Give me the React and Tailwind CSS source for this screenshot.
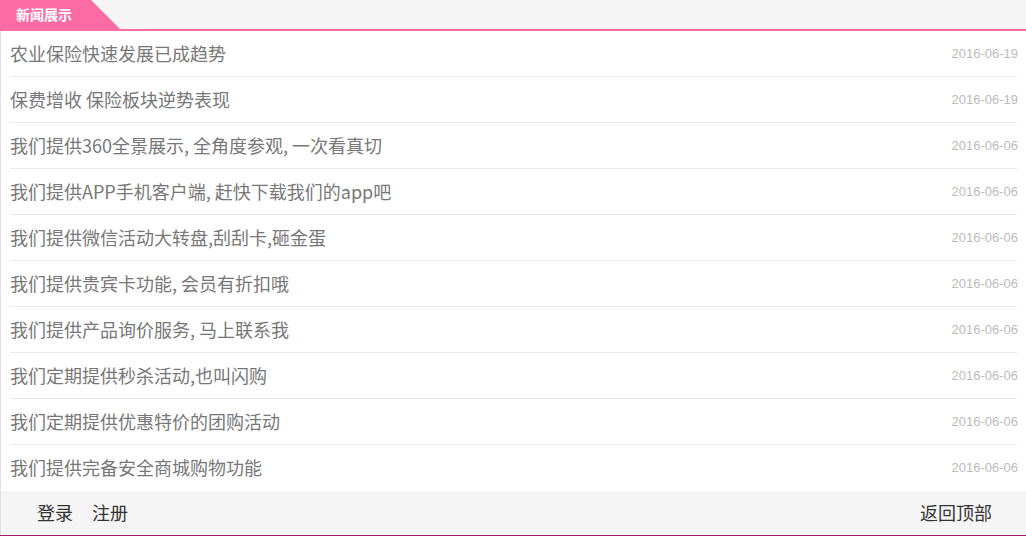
import React from "react";

const items = [
  ["农业保险快速发展已成趋势", "2016-06-19"],
  ["保费增收 保险板块逆势表现", "2016-06-19"],
  ["我们提供360全景展示, 全角度参观, 一次看真切", "2016-06-06"],
  ["我们提供APP手机客户端, 赶快下载我们的app吧", "2016-06-06"],
  ["我们提供微信活动大转盘,刮刮卡,砸金蛋", "2016-06-06"],
  ["我们提供贵宾卡功能, 会员有折扣哦", "2016-06-06"],
  ["我们提供产品询价服务, 马上联系我", "2016-06-06"],
  ["我们定期提供秒杀活动,也叫闪购", "2016-06-06"],
  ["我们定期提供优惠特价的团购活动", "2016-06-06"],
  ["我们提供完备安全商城购物功能", "2016-06-06"],
];

export default function App() {
  return (
    <div className="w-[1026px] h-[538px] bg-white" style={{ fontFamily: '"Noto Sans CJK SC", "Noto Sans", sans-serif' }}>
      <div className="relative h-[29px] bg-[#f5f5f5]">
        <div className="absolute left-0 top-0 h-[29px] w-[120px] bg-[#fd6ba4]" style={{ clipPath: "polygon(0 0, 91px 0, 120px 29px, 0 29px)" }} />
        <span className="absolute left-[16px] top-0 leading-[29px] text-[14px] font-bold text-white">新闻展示</span>
      </div>
      <div className="h-[2px] bg-[#fd6ba4]" />
      <div className="border-l border-[#e0e0e0]">
        {items.map(([t, d], i) => (
          <div key={i} className={`mx-[9px] h-[46px] flex items-center justify-between ${i < items.length - 1 ? "border-b border-[#eaeaea]" : ""}`}>
            <span className="text-[18px] text-[#777] leading-none -mt-[2px]">{t}</span>
            <span className="text-[13px] text-[#bbb] mr-[-1px]" style={{ fontFamily: '"Liberation Sans", Arial, sans-serif' }}>{d}</span>
          </div>
        ))}
        <div className="h-[44px] bg-[#f5f5f5] flex items-center justify-between pl-[36px] pr-[34px] text-[18px] text-[#333]">
          <div className="flex gap-[19px] -mt-[2px]">
            <span>登录</span>
            <span>注册</span>
          </div>
          <span className="-mt-[2px]">返回顶部</span>
        </div>
      </div>
      <div className="h-px bg-[#a0205e]" />
    </div>
  );
}
